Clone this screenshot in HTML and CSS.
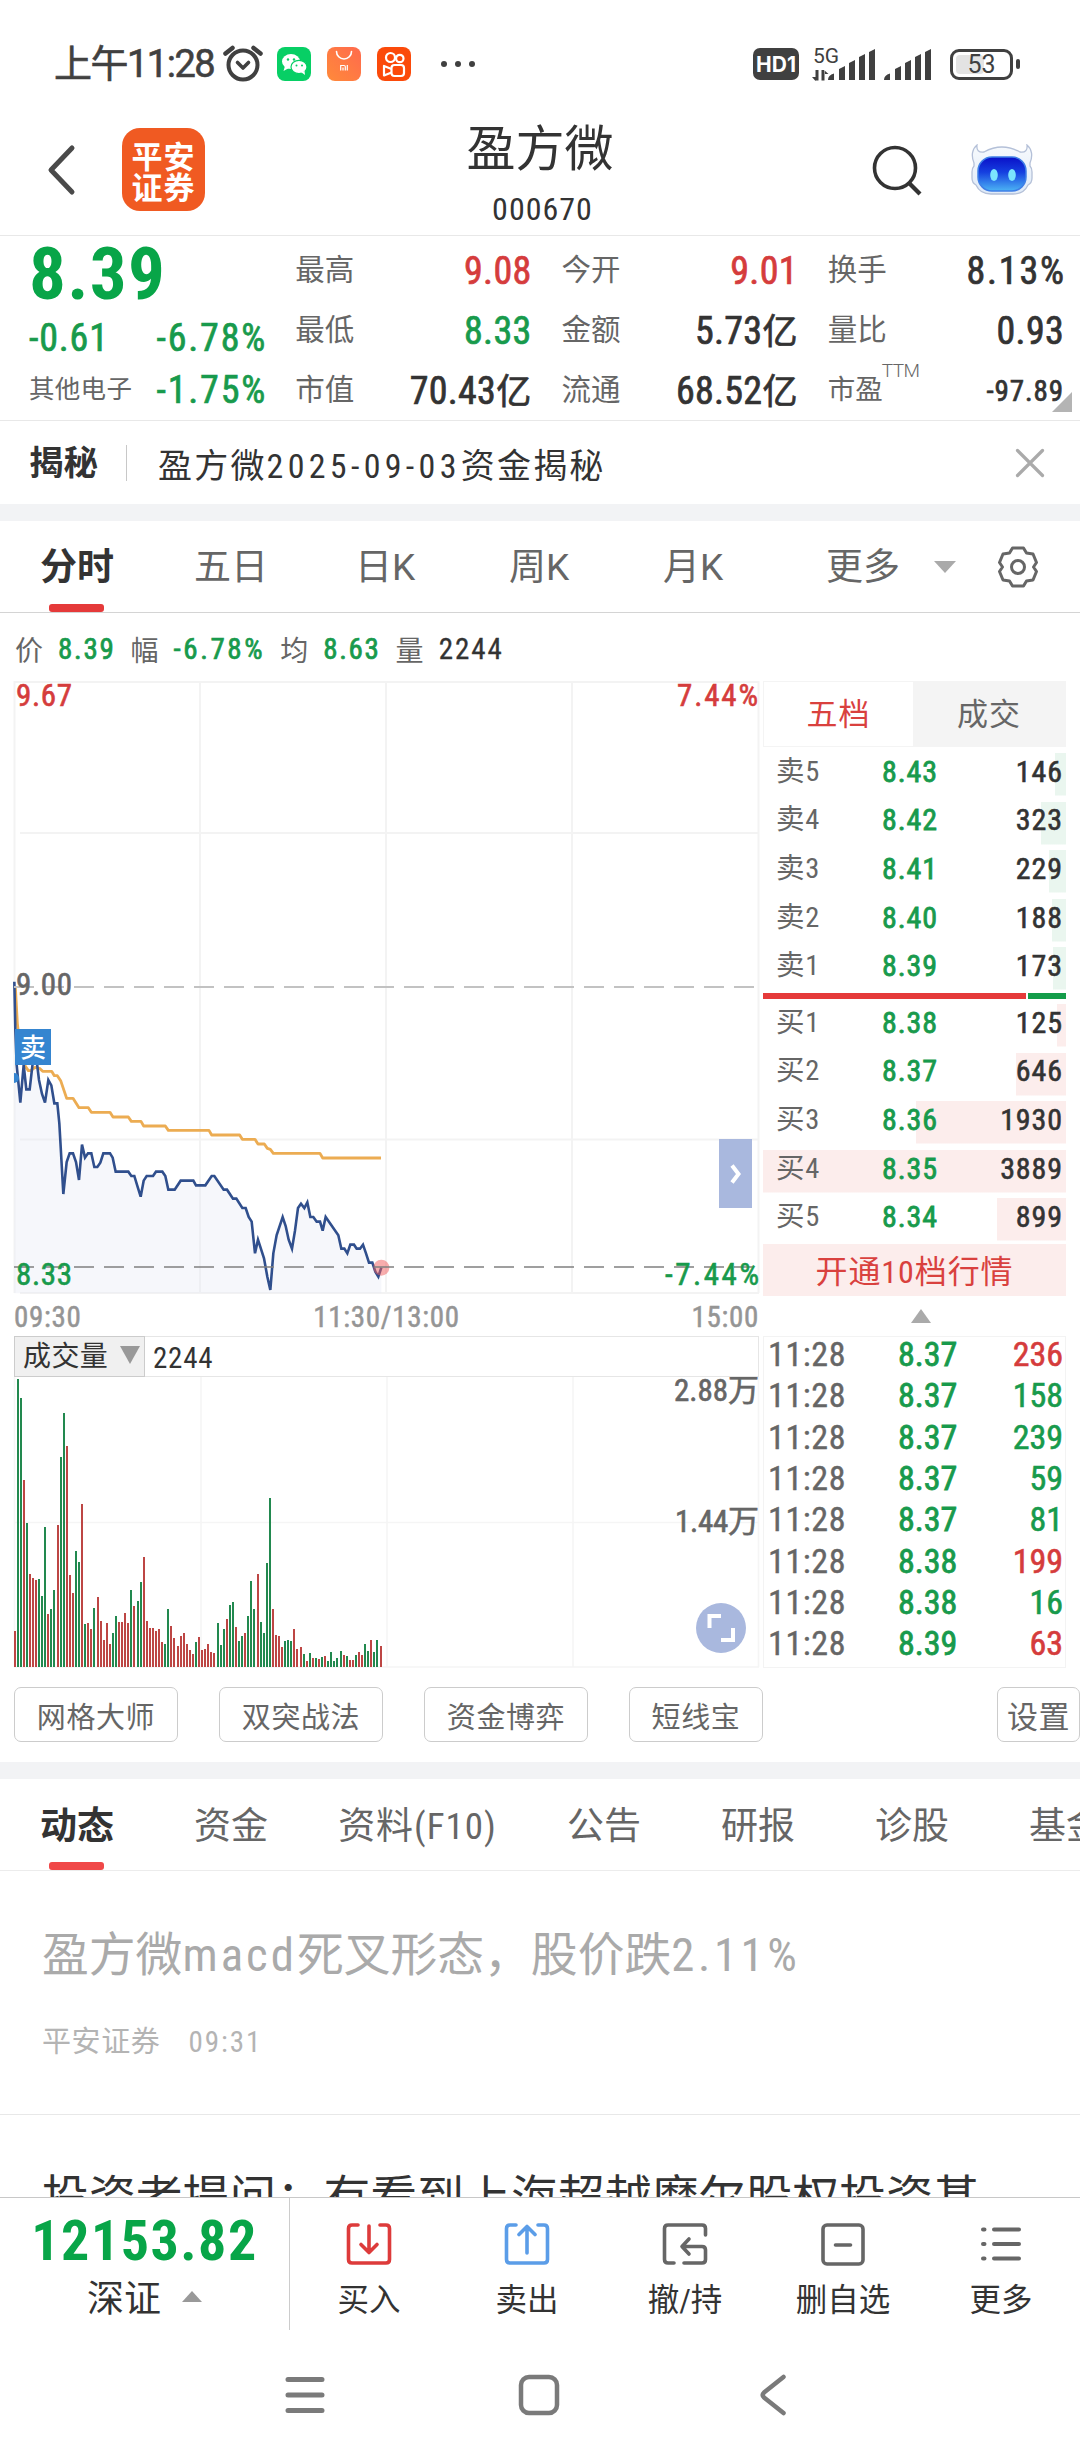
FILE: index.html
```html
<!DOCTYPE html>
<html lang="zh-CN">
<head>
<meta charset="utf-8">
<title>盈方微 000670</title>
<link rel="stylesheet" href="styles.css">
</head>
<body>
<div class="screen">

  <div class="status">
    <span class="clock">上午11:28</span>
    <svg class="alarm" width="40" height="38" viewBox="0 0 40 38" fill="none" stroke="#404040">
      <circle cx="20" cy="20" r="14.5" stroke-width="4"/>
      <path d="M14.5 17.5l5.5 5.5 5.5-5.5" stroke-width="3.6" stroke-linecap="round" stroke-linejoin="round"/>
      <path d="M2.5 8.5l7-5.500M37.500 8.500l-7-5.500" stroke-width="4.500" stroke-linecap="round"/>
    </svg>
    <svg class="app" width="34" height="34" viewBox="0 0 34 34">
      <rect width="34" height="34" rx="8" fill="#07cf65"/>
      <ellipse cx="14" cy="14.500" rx="9" ry="7.500" fill="#fff"/><path d="M8 19l-1.500 5 5.500-3z" fill="#fff"/>
      <ellipse cx="22" cy="20" rx="8" ry="6.700" fill="#fff" stroke="#07cf65" stroke-width="1.200"/><path d="M24 25l4 3-.5-4z" fill="#fff"/>
      <g fill="#07cf65"><circle cx="11" cy="12.500" r="1.200"/><circle cx="17" cy="12.500" r="1.200"/><circle cx="19.500" cy="18.500" r="1"/><circle cx="25" cy="18.500" r="1"/></g>
    </svg>
    <svg class="app" width="34" height="34" viewBox="0 0 34 34">
      <defs><linearGradient id="mi" x1="0" y1="1" x2="1" y2="0"><stop offset="0" stop-color="#ff8a3a"/><stop offset="1" stop-color="#ff6a4d"/></linearGradient></defs>
      <rect width="34" height="34" rx="8" fill="url(#mi)"/>
      <path d="M9.500 4.500a7.500 7.500 0 0 0 15 0" fill="none" stroke="#fff" stroke-width="1.600" stroke-linecap="round"/>
      <path d="M13.700 23.500v-5h3.300q1.300 0 1.300 1.300v3.700M16 20.500v3M20.300 18v5.500" fill="none" stroke="#fff" stroke-width="1.200"/>
    </svg>
    <svg class="app" width="34" height="34" viewBox="0 0 34 34">
      <rect width="34" height="34" rx="8" fill="#fb4a0a"/>
      <g fill="none" stroke="#fff" stroke-width="2.200" stroke-linejoin="round">
        <circle cx="13.500" cy="10.500" r="4.500"/><circle cx="22.800" cy="11.500" r="3.700"/>
        <rect x="14.500" y="18" width="12.500" height="11" rx="3"/><path d="M14.500 22l-7.500-3v9.500l7.500-3"/>
      </g>
    </svg>
    <svg class="dots" width="36" height="8" viewBox="0 0 36 8" fill="#404040"><circle cx="4" cy="4" r="3"/><circle cx="18" cy="4" r="3"/><circle cx="32" cy="4" r="3"/></svg>
    <span class="hd">HD1</span>
    <svg class="signal" width="120" height="36" viewBox="0 0 120 36" fill="#404040">
      <text x="1" y="17" class="net">5G</text>
      <path d="M3.500 24v10.500h3V24zM0 31l3.500 4 1-4zM9.500 24v10.500h3V24zM12 24l4.500 4H12z"/>
      <path d="M16 34q0-5 6-6.500V34zM27 34V23l6-3v14zM37 34V17l6-3v20zM47 34V11l6-3v26zM57 34V6l6-3v31z"/>
      <path d="M72 34q0-5 6-6.500V34zM83 34V23l6-3v14zM93 34V17l6-3v20zM103 34V11l6-3v26zM113 34V6l6-3v31z"/>
    </svg>
    <span class="battery"><i></i><b>53</b></span><span class="nub"></span>
  </div>

  <header class="header">
    <div class="side">
      <svg class="back" width="30" height="52" viewBox="0 0 30 52" fill="none" stroke="#4a4a4a" stroke-width="5" stroke-linecap="round" stroke-linejoin="round"><path d="M25 4L4 26l21 22"/></svg>
      <div class="logo"><span>平安</span><span>证券</span></div>
    </div>
    <div class="name"><h1>盈方微</h1><p>000670</p></div>
    <div class="side right">
      <svg width="50" height="52" viewBox="0 0 50 52" fill="none" stroke="#333" stroke-width="3.600"><circle cx="23" cy="24" r="20.500"/><path d="M37 39l11 11" stroke-width="4.200"/></svg>
      <svg class="robot" width="62" height="52" viewBox="0 0 62 52">
        <defs>
          <linearGradient id="face" x1="0" y1="0" x2="0" y2="1"><stop offset="0" stop-color="#0a10c8"/><stop offset=".45" stop-color="#1540e0"/><stop offset="1" stop-color="#4cb4f4"/></linearGradient>
          <linearGradient id="shell" x1="0" y1="0" x2="0" y2="1"><stop offset="0" stop-color="#f7fafd"/><stop offset="1" stop-color="#dfeaf8"/></linearGradient>
        </defs>
        <path d="M6 1C1 5 0 12 3 19v3q-2 2-2 6v6q0 5 4 7 4 9 15 9h22q11 0 15-9 4-2 4-7v-6q0-4-2-6v-3C62 12 61 5 56 1q1 8-7 7Q31-2 13 8 5 9 6 1z" fill="url(#shell)" stroke="#b4c0d8" stroke-width="1.300"/>
        <rect x="7" y="13" width="48" height="34" rx="14" fill="url(#face)" stroke="#3f7fe6" stroke-width="1.500"/>
        <ellipse cx="23" cy="31" rx="3.800" ry="6" fill="#7be4fd"/><ellipse cx="41" cy="31" rx="3.800" ry="6" fill="#7be4fd"/>
      </svg>
    </div>
  </header>

  <section class="quote">
    <div class="price">
      <div class="last">8.39</div>
      <div class="pair"><span>-0.61</span><span class="pct">-6.78%</span></div>
      <div class="pair sector"><em>其他电子</em><span class="pct">-1.75%</span></div>
    </div>
    <dl class="stats">
      <div><dt>最高</dt><dd class="up">9.08</dd></div>
      <div><dt>最低</dt><dd class="down">8.33</dd></div>
      <div><dt>市值</dt><dd>70.43<u>亿</u></dd></div>
    </dl>
    <dl class="stats">
      <div><dt>今开</dt><dd class="up">9.01</dd></div>
      <div><dt>金额</dt><dd>5.73<u>亿</u></dd></div>
      <div><dt>流通</dt><dd>68.52<u>亿</u></dd></div>
    </dl>
    <dl class="stats">
      <div><dt>换手</dt><dd class="pct">8.13%</dd></div>
      <div><dt>量比</dt><dd>0.93</dd></div>
      <div class="pe"><dt>市盈<sup>TTM</sup></dt><dd>-97.89</dd></div>
    </dl>
    <i class="corner"></i>
  </section>

  <section class="notice">
    <b>揭秘</b><span class="text">盈方微<em>2025-09-03</em>资金揭秘</span>
    <svg width="30" height="30" viewBox="0 0 30 30" stroke="#aaa" stroke-width="3.200" stroke-linecap="round"><path d="M2.500 2.500l25 25M27.500 2.500l-25 25"/></svg>
  </section>
  <div class="band"></div>

  <nav class="periods">
    <span class="on">分时</span><span>五日</span><span>日K</span><span>周K</span><span>月K</span>
    <span class="more">更多</span><i class="caret"></i>
    <svg width="42" height="44" viewBox="0 0 42 44" fill="none" stroke="#666" stroke-width="3" stroke-linejoin="round"><path d="M15.500 3h11l3 5 6.500 1 3.500 8.500L36.500 22l3 4.500L36 35l-6.500 1-3 5h-11l-3-5L6 35l-3.500-8.500 3-4.500-3-4.500L6 9l6.500-1z"/><circle cx="21" cy="22" r="6.500"/></svg>
  </nav>

  <section class="market">
    <div class="left">
      <div class="info"><span>价</span><b>8.39</b><span>幅</span><b class="pct">-6.78%</b><span>均</span><b>8.63</b><span>量</span><b class="dark">2244</b></div>
      <svg class="intraday" width="760" height="614" viewBox="0 680 760 614">
        <g stroke="#f3f3f3" stroke-width="2">
          <path d="M14.500 681V1293M200 681V1293M386 681V1293M572 681V1293M758.500 681V1293M14 682H759M20 833H759M20 1139.500H759M20 1293H759"/>
        </g>
        <g transform="translate(0 980) scale(.33333)" fill="none" stroke-linejoin="round">
          <path id="area" fill="#e6e9f4" fill-opacity=".36"/>
          <path id="average" stroke="#ecac52" stroke-width="8.500"/>
          <path id="line" stroke="#304f8d" stroke-width="7.800" stroke-linejoin="miter"/>
          <circle cx="1144" cy="863" r="24" fill="#f25b5b" fill-opacity=".5"/>
        </g>
        <path d="M14 987H756" stroke="#c2c2c2" stroke-width="1.800" stroke-dasharray="20 10"/>
        <path d="M14 1267H756" stroke="#808080" stroke-width="1.500" stroke-dasharray="20 10"/>
        <path d="M14 1073a5 5 0 0 1 0 10z" fill="#3585d0"/>
        <rect x="15" y="1029" width="36" height="36" fill="#3585d0"/>
        <text x="33" y="1056.500" class="badge" text-anchor="middle">卖</text>
        <g class="axis">
          <text x="16" y="706" textLength="56" class="up">9.67</text>
          <text x="16" y="995" textLength="56" class="mid">9.00</text>
          <text x="16" y="1285" textLength="56" class="down">8.33</text>
          <text x="677" y="706" textLength="81" class="up">7.44%</text>
          <text x="665" y="1285" textLength="94" class="down">-7.44%</text>
        </g>
        <rect x="719" y="1139" width="33" height="69" fill="#a9b8de"/>
        <path d="M732 1165.500l6.500 8.500-6.500 8.500" fill="none" stroke="#fff" stroke-width="4"/>
      </svg>
      <div class="times"><span>09:30</span><span>11:30/13:00</span><span>15:00</span></div>
      <div class="volhead"><div class="select">成交量<i></i></div><span>2244</span></div>
      <svg class="volume" width="760" height="291" viewBox="0 1377 760 291">
        <path d="M14.500 1377V1667M201 1377V1667M387 1377V1667M573 1377V1667M758.500 1377V1667M14 1522.500H759M14 1667H759" stroke="#f5f5f5" stroke-width="1.600" fill="none"/>
        <g id="bars" shape-rendering="crispEdges"></g>
        <g class="axis mid"><text x="674" y="1401" textLength="85">2.88万</text><text x="675" y="1532" textLength="84">1.44万</text></g>
        <circle cx="721" cy="1628" r="25" fill="#a9b8de"/>
        <path d="M709.500 1628v-12H721M721 1640h12v-12" fill="none" stroke="#fff" stroke-width="4"/>
      </svg>
    </div>

    <div class="right-col">
      <div class="switch"><span class="on">五档</span><span>成交</span></div>
      <div class="book sell">
        <div style="--w:11px"><span>卖5</span><b>8.43</b><em>146</em></div>
        <div style="--w:25px"><span>卖4</span><b>8.42</b><em>323</em></div>
        <div style="--w:17px"><span>卖3</span><b>8.41</b><em>229</em></div>
        <div style="--w:14px"><span>卖2</span><b>8.40</b><em>188</em></div>
        <div style="--w:13px"><span>卖1</span><b>8.39</b><em>173</em></div>
      </div>
      <div class="ratio"><i></i><i></i></div>
      <div class="book buy">
        <div style="--w:9px"><span>买1</span><b>8.38</b><em>125</em></div>
        <div style="--w:50px"><span>买2</span><b>8.37</b><em>646</em></div>
        <div style="--w:150px"><span>买3</span><b>8.36</b><em>1930</em></div>
        <div style="--w:303px"><span>买4</span><b>8.35</b><em>3889</em></div>
        <div style="--w:69px"><span>买5</span><b>8.34</b><em>899</em></div>
      </div>
      <div class="level2">开通10档行情</div>
      <div class="fold"><i></i></div>
      <div class="ticks">
        <div><span>11:28</span><b>8.37</b><em class="up">236</em></div>
        <div><span>11:28</span><b>8.37</b><em>158</em></div>
        <div><span>11:28</span><b>8.37</b><em>239</em></div>
        <div><span>11:28</span><b>8.37</b><em>59</em></div>
        <div><span>11:28</span><b>8.37</b><em>81</em></div>
        <div><span>11:28</span><b>8.38</b><em class="up">199</em></div>
        <div><span>11:28</span><b>8.38</b><em>16</em></div>
        <div><span>11:28</span><b>8.39</b><em class="up">63</em></div>
      </div>
    </div>
  </section>

  <div class="tools"><button>网格大师</button><button>双突战法</button><button>资金博弈</button><button class="short">短线宝</button><button class="set">设置</button></div>
  <div class="band"></div>

  <nav class="topics">
    <span class="on">动态</span><span>资金</span><span class="wide">资料(F10)</span><span>公告</span><span>研报</span><span>诊股</span><span>基金</span>
  </nav>

  <section class="news">
    <article><h2>盈方微<em>macd</em>死叉形态，股价跌<em class="rate">2.11%</em></h2><p><span>平安证券</span><time>09:31</time></p></article>
    <article class="next"><h2>投资者提问：有看到上海超越摩尔股权投资基</h2></article>
  </section>

  <footer class="actions">
    <div class="index"><b>12153.82</b><p>深证<i></i></p></div>
    <div class="act"><svg width="48" height="46" viewBox="0 0 48 46" fill="none" stroke="#dd3b3b" stroke-width="3.600" stroke-linecap="round" stroke-linejoin="round"><path d="M13 4H7q-3.500 0-3.500 3.500v31Q3.500 42 7 42h34q3.500 0 3.500-3.500v-31Q44.500 4 41 4h-6M24 5v26M16 23.500l8 8 8-8"/></svg>买入</div>
    <div class="act"><svg width="48" height="46" viewBox="0 0 48 46" fill="none" stroke="#5b9de8" stroke-width="3.600" stroke-linecap="round" stroke-linejoin="round"><path d="M13 4H7q-3.500 0-3.500 3.500v31Q3.500 42 7 42h34q3.500 0 3.500-3.500v-31Q44.500 4 41 4h-6M24 32V6M16 13.500l8-8 8 8"/></svg>卖出</div>
    <div class="act"><svg width="48" height="46" viewBox="0 0 48 46" fill="none" stroke="#666" stroke-width="3.600" stroke-linecap="round" stroke-linejoin="round"><path d="M13 42H7q-3.500 0-3.500-3.500v-31Q3.500 4 7 4h34q3.500 0 3.500 3.500V14M23 42h18q3.500 0 3.500-3.500V29q0-3.500-3.500-3.500H22M28 18l-7 7.500 7 7.500"/></svg>撤/持</div>
    <div class="act"><svg width="48" height="46" viewBox="0 0 48 46" fill="none" stroke="#666" stroke-width="3.600" stroke-linecap="round"><rect x="4" y="4" width="40" height="39" rx="4"/><path d="M16.500 24h15"/></svg>删自选</div>
    <div class="act"><svg width="48" height="46" viewBox="0 0 48 46" fill="none" stroke="#666" stroke-width="4" stroke-linecap="round"><path d="M6 8.500h1.500M17 8.500h25M6 23h1.500M17 23h25M6 37.500h1.500M17 37.500h25"/></svg>更多</div>
  </footer>

  <div class="system">
    <svg width="40" height="40" viewBox="0 0 40 40" stroke="#7a7a7a" stroke-width="5" stroke-linecap="round"><path d="M3 4.500h34M3 20h34M3 35.500h34"/></svg>
    <svg class="home" width="42" height="42" viewBox="0 0 42 42" fill="none" stroke="#7a7a7a" stroke-width="4.500"><rect x="3" y="3" width="36" height="36" rx="8"/></svg>
    <svg width="28" height="42" viewBox="0 0 28 42" fill="none" stroke="#7a7a7a" stroke-width="4.500" stroke-linecap="round" stroke-linejoin="round"><path d="M24.500 3L5 18.500q-2.500 2.500 0 5L24.500 39"/></svg>
  </div>
</div>
<script src="chart.js"></script>
</body>
</html>
```
FILE: styles.css
```css
* { box-sizing: border-box; margin: 0; padding: 0; }
body { background: #fff; }
.screen {
  width: 1080px; height: 2460px; overflow: hidden; background: #fff; color: #333;
  font-family: "Roboto Condensed", "Noto Sans CJK SC", sans-serif;
  display: flex; flex-direction: column;
}
.screen > * { flex: none; }
em, i, u { font-style: normal; text-decoration: none; }
svg { display: block; flex: none; }
.up { color: #d53c3c; fill: #d53c3c; }
.down { color: #189a4c; fill: #189a4c; }

.status { height: 104px; padding: 24px 0 0 54px; display: flex; align-items: center; color: #404040; }
.clock { width: 168px; font: 38px/50px Roboto, "Noto Sans CJK SC", sans-serif; letter-spacing: -1.5px; white-space: nowrap; -webkit-text-stroke: .6px #404040; }
.alarm { margin: 0 14px 0 1px; }
.app { margin-right: 16px; }
.dots { margin-left: 13px; }
.hd { margin-left: 277px; width: 46px; height: 32px; border-radius: 7px; background: #404040; color: #fff; font: bold 21px/33px Inter, sans-serif; text-align: center; }
.signal { margin: 0 18px 0 13px; }
.net { font: 21px Roboto, sans-serif; }
.battery { position: relative; width: 63px; height: 31px; border: 3px solid #404040; border-radius: 9px; text-align: center; }
.battery i { position: absolute; left: 3px; top: 3px; width: 28px; height: 19px; background: #e3e3e3; border-radius: 4px; }
.battery b { position: relative; display: block; font: 25px/26px Roboto, sans-serif; }
.nub { width: 4px; height: 10px; margin-left: 3px; border-radius: 2px; background: #404040; }

.header { height: 132px; border-bottom: 1px solid #e8e8e8; display: grid; grid-template-columns: 1fr auto 1fr; }
.side { display: flex; align-items: center; padding-left: 47px; }
.back { margin-right: 45px; }
.logo { width: 83px; height: 83px; border-radius: 18px; background: #f05a22; color: #fff; display: flex; flex-direction: column; justify-content: center; align-items: center; }
.logo span { font: bold 31px/31px "Noto Sans CJK SC", sans-serif; letter-spacing: 1px; }
.side.right { justify-content: flex-end; padding: 0 47px 0 0; gap: 49px; }
.name { text-align: center; padding-top: 16px; }
.name h1 { font-size: 49px; font-weight: 400; line-height: 60px; }
.name p { font-size: 32px; line-height: 42px; letter-spacing: 1px; padding: 8px 0 0 5px; }

.quote { position: relative; height: 185px; padding: 0 16px 0 29px; border-bottom: 1px solid #e8e8e8; display: grid; grid-template-columns: repeat(4, 1fr); gap: 30px; }
.price { color: #189a4c; }
.last { font-size: 73px; font-weight: 700; line-height: 76px; height: 74px; color: #08a548; letter-spacing: 1.300px; }
.pair { display: flex; justify-content: space-between; align-items: center; height: 55px; font-size: 38px; letter-spacing: .8px; -webkit-text-stroke: .7px; }
.pair .pct, .stats .pct { letter-spacing: 1.800px; margin-right: -1.800px; }
.pair.sector { height: 50px; }
.pair em { font-size: 25.500px; line-height: 36px; padding-bottom: 2px; color: #666; letter-spacing: .3px; -webkit-text-stroke: 0; }
.stats { padding-top: 5px; }
.stats div { height: 60px; display: flex; justify-content: space-between; align-items: center; white-space: nowrap; }
.stats dt { font-size: 29.500px; line-height: 44px; padding-bottom: 3px; color: #666; }
.stats dd { font-size: 38px; line-height: 44px; -webkit-text-stroke: .7px; letter-spacing: .3px; }
.stats u { font-size: 35px; line-height: 36px; }
.stats .pe dt { font-size: 27.500px; position: relative; }
.pe sup { position: absolute; left: 54px; top: -8px; font: 300 19px/22px Roboto, sans-serif; letter-spacing: -.5px; }
.stats .pe dd { font-size: 29px; letter-spacing: .9px; }
.corner { position: absolute; right: 8px; bottom: 8px; border: 10px solid; border-color: transparent #b4b4b4 #b4b4b4 transparent; }

.notice { height: 83px; padding: 1px 35px 0 29px; display: flex; align-items: center; }
.notice b { font-size: 34.500px; padding-right: 28px; border-right: 1px solid #c8c8c8; line-height: 36px; }
.notice .text { flex: 1; margin-left: 31px; font-size: 34px; letter-spacing: 2.200px; white-space: nowrap; }
.notice em { letter-spacing: 4.300px; }
.band { height: 17px; background: #f2f3f5; }

.periods { height: 92px; border-bottom: 1px solid #d4d4d4; display: flex; align-items: center; font-size: 37px; color: #666; }
.periods > span, .topics > span { width: 154px; text-align: center; height: 91px; line-height: 93px; position: relative; white-space: nowrap; }
.periods .on, .topics .on { font-weight: 700; color: #333; }
.periods .on::after, .topics .on::after { content: ""; position: absolute; left: 49px; bottom: 0; width: 55px; height: 8px; border-radius: 3px; background: #e53a3a; }
.periods .more { width: 76px; margin-left: 55px; }
.periods { font-family: Roboto, "Noto Sans CJK SC", sans-serif; }
.caret { border: 11px solid transparent; border-top: 12px solid #aaa; border-bottom: 0; margin: 0 41px 0 33px; }

.market { display: flex; height: 1055px; padding-right: 14px; }
.left { width: 759px; margin-right: 4px; }
.info { height: 67px; padding: 4px 0 0 15px; display: flex; align-items: center; gap: 15px; font-size: 28px; color: #666; }
.info b { font-weight: 400; color: #189a4c; font-size: 29px; letter-spacing: 1.700px; -webkit-text-stroke: .7px; }
.info .pct { letter-spacing: 2.600px; }
.info .dark { color: #333; letter-spacing: 2px; -webkit-text-stroke: .3px; }
.axis text { font-size: 31px; stroke-width: .6px; }
.axis .up { stroke: #d53c3c; }
.axis .down { stroke: #189a4c; }
.mid { fill: #666; stroke: #666; }
.badge { font: 500 26px "Noto Sans CJK SC", sans-serif; fill: #fff; }
.times { height: 42px; padding: 3px 0 0 14px; display: flex; justify-content: space-between; align-items: center; font-size: 29px; letter-spacing: .7px; color: #959595; -webkit-text-stroke: .5px; }
.volhead { height: 41px; margin-left: 14px; border: 1px solid #e6e6e6; display: flex; align-items: center; font-size: 29px; letter-spacing: .8px; }
.volhead > span { padding-top: 2px; }
.select { width: 131px; height: 41px; margin: -1px 8px -1px -1px; padding-left: 8px; background: #f0f0f0; border: 1px solid #ccc; display: flex; align-items: center; font-size: 28px; line-height: 40px; letter-spacing: .4px; white-space: nowrap; }
.select i { border: 10px solid transparent; border-top: 18px solid #999; border-bottom: 0; margin: -4px 0 0 12px; }

.right-col { width: 303px; padding-top: 68px; }
.switch { height: 66px; display: flex; font-size: 31px; letter-spacing: 1px; line-height: 65px; text-align: center; border: 1px solid #f4f4f4; }
.switch span { flex: 1; background: #f4f4f4; color: #666; }
.switch .on { flex: none; width: 149px; background: #fff; color: #d9413e; }
.book { height: 243px; }
.sell { margin-top: 3px; }
.book div { height: 48.600px; padding: 1px 3px 6px 13px; display: grid; grid-template-columns: 106px 1fr auto; align-items: center; line-height: 40px; background: linear-gradient(var(--c), var(--c)) no-repeat right 3px / var(--w) 42.500px; }
.sell div { --c: #eaf6ef; }
.buy div { --c: #fcedec; }
.book span { font-size: 28.500px; color: #666; letter-spacing: .8px; }
.book b, .ticks b { font-weight: 400; color: #189a4c; -webkit-text-stroke: .8px; }
.book em, .ticks em { -webkit-text-stroke: .6px; text-align: right; }
.book b, .book em { font-size: 30px; letter-spacing: .9px; }
.ratio { height: 6px; margin-bottom: 2px; display: flex; gap: 2px; }
.ratio i { width: 263px; background: #e53a3a; }
.ratio i + i { flex: 1; background: #149c4a; }
.level2 { height: 52px; background: #fcedec; color: #d9413e; font-size: 32px; letter-spacing: .9px; line-height: 57px; text-align: center; }
.fold { height: 41px; padding: 13px 0 0 148px; }
.fold i { display: block; width: 0; border: 10.500px solid transparent; border-bottom: 14px solid #aaa; border-top: 0; }
.ticks { height: 332px; border: 1px solid #f3f3f3; padding: 1px 2px 0 4px; margin-top: -1px; }
.ticks div { height: 41.300px; padding-bottom: 8px; display: grid; grid-template-columns: 130px 1fr auto; align-items: center; line-height: 33px; font-size: 34px; }
.ticks span { color: #666; letter-spacing: .6px; -webkit-text-stroke: .4px; }
.ticks em { color: #189a4c; }
.ticks .up { color: #d53c3c; }

.tools { height: 94px; padding: 19px 0 20px 14px; display: flex; gap: 41px; }
.tools button { width: 164px; border: 1.500px solid #ccc; border-radius: 7px; background: #fff; color: #666; font: 29px/48px "Noto Sans CJK SC", sans-serif; letter-spacing: .6px; white-space: nowrap; }
.tools .short { width: 134px; }
.tools .set { width: 83px; margin-left: auto; font-size: 31px; }

.topics { height: 92px; border-bottom: 1px solid #ececec; display: flex; font-size: 37px; color: #666; width: 1200px; }
.topics .wide { width: 219px; letter-spacing: 1px; }
.topics > span { line-height: 95px; }
.topics .on::after { background: #f04848; }
.news { height: 326px; overflow: hidden; }
.news article { height: 244px; padding: 54px 41px 0 42px; border-bottom: 1px solid #e8e8e8; white-space: nowrap; }
.news h2 { font-size: 46.800px; font-weight: 400; line-height: 60px; color: #aaa; }
.news h2 em { letter-spacing: 3px; }
.news h2 .rate { letter-spacing: 3.600px; }
.news p { margin-top: 37px; font-size: 29px; line-height: 40px; letter-spacing: .6px; color: #b4b4b4; display: flex; gap: 28px; }
.news time { letter-spacing: 2px; }
.news .next { padding-top: 53px; }
.news .next h2 { color: #333; letter-spacing: .1px; }

.actions { height: 133px; border-top: 1.500px solid #c8c8c8; display: flex; background: #fff; }
.index { width: 290px; border-right: 1px solid #ccc; text-align: center; }
.index b { display: block; height: 62px; line-height: 87px; font-size: 56px; letter-spacing: 1.500px; color: #08a548; }
.index p { font-size: 37px; line-height: 76px; height: 80px; display: flex; align-items: center; justify-content: center; gap: 21px; }
.index i { border: 10px solid transparent; border-bottom: 11px solid #999; border-top: 0; margin-bottom: 8px; }
.act { flex: 1; display: flex; flex-direction: column; align-items: center; padding-top: 23px; font-size: 31.500px; line-height: 44px; gap: 12px; }

.system { height: 130px; padding: 0 293px 0 285px; display: flex; align-items: center; justify-content: space-between; }
.home { margin-right: 6px; }
```
FILE: chart.js
```javascript
// Minute prices and running average, in thirds of a pixel from the 980px line.
const price = "43,5 46,150 50,255 61,368 71,255 79,328 89,328 98,250 111,250 117,300 126,342 135,368 145,300 154,316 163,370 172,370 178,430 182,500 190,642 200,546 209,520 219,520 228,546 237,600 246,494 255,533 264,520 274,520 283,561 292,561 301,548 310,520 330,520 338,533 347,575 385,575 394,588 403,588 412,618 422,650 431,602 440,588 459,588 468,575 487,575 496,588 505,629 524,629 542,602 580,602 588,616 616,616 635,588 643,588 671,629 681,629 699,656 709,656 727,684 737,684 746,711 755,725 765,820 774,779 792,835 802,890 811,930 820,820 830,765 848,711 857,738 866,779 876,806 885,752 894,684 903,671 913,684 922,667 931,711 940,711 950,725 960,725 968,752 977,711 1015,766 1024,806 1033,806 1042,820 1051,794 1062,794 1070,806 1080,806 1089,794 1098,820 1107,848 1117,848 1126,875 1135,890 1144,863";
const average = "46,20 52,130 60,200 70,250 85,272 92,272 105,262 120,266 128,274 155,274 163,287 172,287 182,302 200,355 219,355 237,383 265,383 274,397 330,397 339,411 385,411 394,424 423,424 431,438 496,438 505,451 627,451 635,465 719,465 727,478 765,478 774,492 793,492 802,505 811,508 820,520 960,520 968,534 1143,534";
document.getElementById("line").setAttribute("d", "M" + price);
document.getElementById("average").setAttribute("d", "M" + average);
document.getElementById("area").setAttribute("d", "M" + price + " 1144,940 43,940z");

// Volume per minute: bar height in pixels, prefixed with direction (r = up, g = down).
const volume = "r36 g288 g269 r187 g144 r93 r89 r87 g88 g71 g140 r53 g58 g77 r142 g210 g254 r221 r92 r74 g116 g105 r163 g43 r44 r38 g59 r70 r46 r27 r44 r23 g34 g51 r45 r45 r54 r44 g77 r61 g66 g85 r110 r46 r39 r39 r36 r38 r25 g23 g58 r41 r29 r21 r31 r34 r23 r17 r13 g25 r30 r17 r18 r23 r15 r14 g44 g22 g38 r48 g62 g65 r40 g26 g31 r34 g51 g86 g58 r93 g45 g34 g104 g169 r58 r32 r31 r20 g26 g27 g26 r38 r18 r20 g13 r6 g14 r9 g9 r8 g10 r11 g6 g15 g6 g9 g16 r12 g11 r7 r7 g12 r15 r12 g23 g16 r27 g15 g27 r21".split(" ");
const bars = document.getElementById("bars");
volume.forEach((v, i) => {
  const h = +v.slice(1);
  const r = document.createElementNS("http://www.w3.org/2000/svg", "rect");
  r.setAttribute("x", Math.floor(14 + i * 3.076));
  r.setAttribute("y", 1667 - h);
  r.setAttribute("width", 2);
  r.setAttribute("height", h);
  r.setAttribute("fill", v[0] === "r" ? "#bd4644" : "#22894f");
  bars.appendChild(r);
});
```
